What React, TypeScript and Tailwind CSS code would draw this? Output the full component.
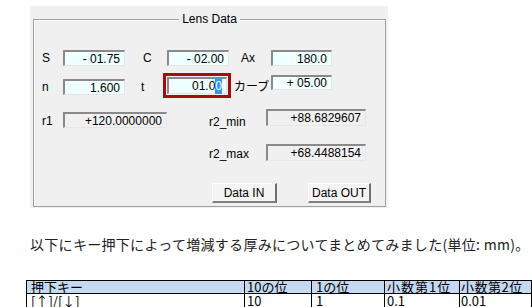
import React from 'react'

const ui = "font-['Liberation_Sans','Noto_Sans_CJK_JP',sans-serif] text-[12px] leading-[16px] text-black"
const jp = "font-['Noto_Sans_CJK_JP','Liberation_Sans',sans-serif]"

// sunken Windows-style edit box
function Field({ value, w, h = 16, ro = false, children }: { value?: string; w: number; h?: number; ro?: boolean; children?: React.ReactNode }) {
  return (
    <div
      className={`flex items-center justify-end border-t-2 border-l-2 border-b border-r border-t-[#8a8a8a] border-l-[#8a8a8a] border-b-[#e6e6e6] border-r-[#e6e6e6] pr-[4px] ${ro ? 'bg-[#f0f0f0]' : 'bg-[#f0ffff]'}`}
      style={{ width: w, height: h }}
    >
      {children ?? <span className="whitespace-pre">{value}</span>}
    </div>
  )
}

function Btn({ label, w }: { label: string; w: number }) {
  return (
    <button
      type="button"
      className="flex h-[20px] items-center justify-center border-t border-l border-t-white border-l-white border-r-2 border-b-2 border-r-[#707070] border-b-[#808080] bg-[#f4f4f4] text-[12px]"
      style={{ width: w }}
    >
      {label}
    </button>
  )
}

export default function App() {
  return (
    <div className="h-[307px] w-[532px] overflow-hidden bg-white">
      {/* ── Lens Data form ─────────────────────────────── */}
      <div className={`ml-[30px] mt-[6px] h-[202px] w-[358px] bg-[#f0f0f0] pt-[13px] pl-[3px] pr-[2px] pb-[1px] ${ui}`}>
        <div className="relative h-full border border-[#a0a0a0] shadow-[inset_1px_1px_0_#fff]">
          <div className="absolute -top-[9px] left-0 right-0 flex justify-center">
            <span className="bg-[#f0f0f0] px-[3px]">Lens Data</span>
          </div>

          <div className="flex flex-col pl-[8px]">
            {/* S / C / Ax */}
            <div className="mt-[30px] flex h-[16px] items-center">
              <span className="w-[21px]">S</span>
              <Field w={62} value="- 01.75" />
              <span className="ml-[18px] w-[24px]">C</span>
              <Field w={62} value="- 02.00" />
              <span className="ml-[12px] w-[30px]">Ax</span>
              <Field w={61} value="180.0" />
            </div>

            {/* n / t / カーブ */}
            <div className="mt-[7px] flex items-start">
              <span className="mt-[6px] w-[21px]">n</span>
              <div className="mt-[6px]"><Field w={62} value="1.600" /></div>
              <span className="ml-[16px] mt-[6px] w-[22px]">t</span>
              <div className="h-[25px] w-[68px] border-[3px] border-[#a50d0d] p-[1px]">
                <Field w={60} h={17}>
                  <span>01.0</span>
                  <span className="bg-[#3399ff] text-white">0</span>
                </Field>
              </div>
              <span className={`ml-[3px] mt-[5px] w-[37px] ${jp}`}>カーブ</span>
              <div className="mt-[2px]"><Field w={61} h={15} value="+ 05.00" /></div>
            </div>

            {/* r1 / r2_min */}
            <div className="mt-[11px] flex items-start">
              <span className="mt-[4px] w-[21px]">r1</span>
              <div className="mt-[3px]"><Field w={104} ro value="+120.0000000" /></div>
              <span className="ml-[42px] mt-[5px] w-[57px]">r2_min</span>
              <Field w={100} h={17} ro value="+88.6829607" />
            </div>

            {/* r2_max */}
            <div className="mt-[13px] ml-[167px] flex items-center">
              <span className="w-[57px] pt-[3px]">r2_max</span>
              <Field w={100} h={17} ro value="+68.4488154" />
            </div>

            <div className="mt-[21px] ml-[170px] flex gap-[31px]">
              <Btn label="Data IN" w={65} />
              <Btn label="Data OUT" w={63} />
            </div>
          </div>
        </div>
      </div>

      {/* ── note + table ───────────────────────────────── */}
      <p className={`ml-[30px] mt-[27px] text-[14px] leading-[18px] tracking-[0.3px] text-[#222] ${jp}`}>
        以下にキー押下によって増減する厚みについてまとめてみました(単位: mm)。
      </p>

      <table className={`ml-[26px] mt-[27px] border-collapse text-[13px] leading-[12px] text-black ${jp}`}>
        <tbody>
          <tr className="bg-[#c5d9f1]">
            <td className="h-[12px] w-[218px] border border-black p-0 pl-[4px]">押下キー</td>
            <td className="w-[67px] border border-black p-0 pl-[2px]">10の位</td>
            <td className="w-[73px] border border-black p-0 pl-[4px]">1の位</td>
            <td className="w-[75px] border border-black p-0 pl-[2px] tracking-[1px]">小数第1位</td>
            <td className="w-[72px] border border-black p-0 pl-[1px] tracking-[0.5px]">小数第2位</td>
          </tr>
          <tr>
            <td className="h-[14px] border border-black p-0 pl-[4px]">[↑]/[↓]</td>
            <td className="border border-black p-0 pl-[2px]">10</td>
            <td className="border border-black p-0 pl-[4px]">1</td>
            <td className="border border-black p-0 pl-[2px]">0.1</td>
            <td className="border border-black p-0 pl-[1px]">0.01</td>
          </tr>
        </tbody>
      </table>
    </div>
  )
}
